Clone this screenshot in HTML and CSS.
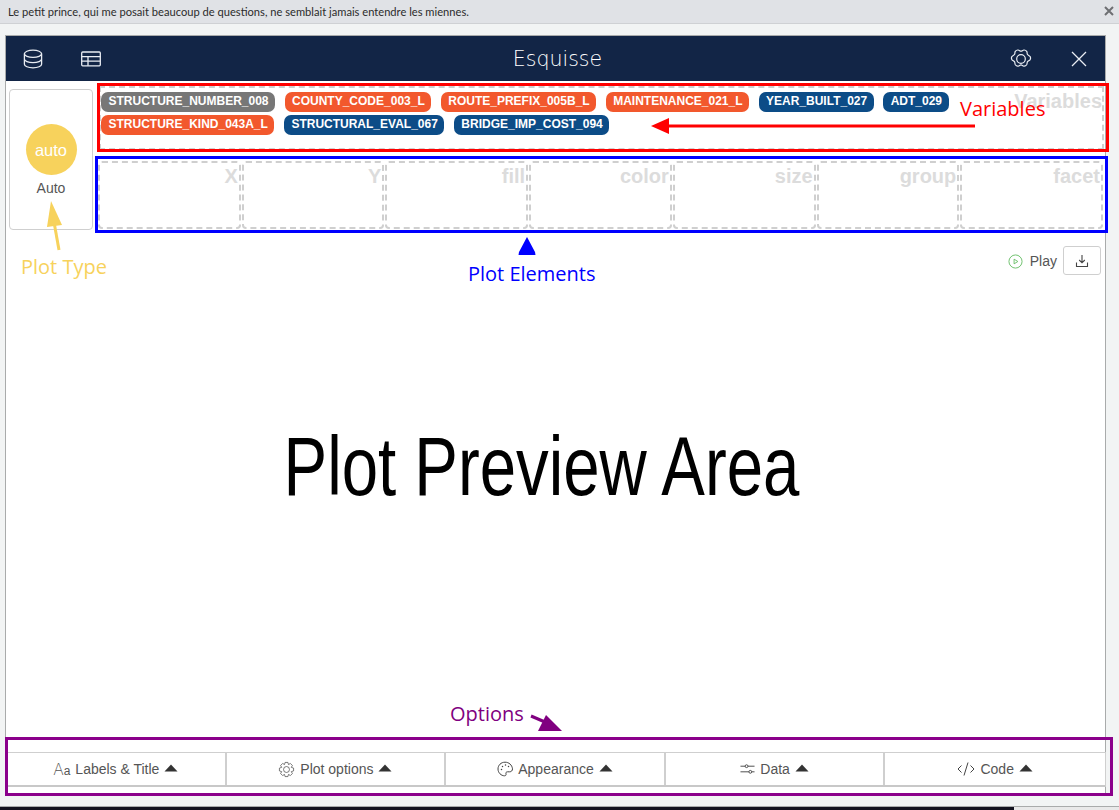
FILE: index.html
```html
<!DOCTYPE html>
<html lang="en">
<head>
<meta charset="utf-8">
<title>Esquisse</title>
<link rel="stylesheet" href="styles.css">
</head>
<body>
<div class="notice">
  <span>Le petit prince, qui me posait beaucoup de questions, ne semblait jamais entendre les miennes.</span>
  <svg class="notice-x" viewBox="0 0 10 10" width="10" height="10"><path d="M1 1l8 8M9 1l-8 8"/></svg>
</div>
<div class="stage">
  <main class="modal">
    <header class="head">
      <div class="head-side">
        <svg class="hicon" viewBox="0 0 20 20" width="20" height="20"><ellipse cx="10" cy="4.8" rx="8.6" ry="3.6"/><path d="M1.4 4.8v10.4c0 2 3.9 3.6 8.6 3.6s8.6-1.600 8.600-3.600V4.800M1.400 10c0 2 3.900 3.600 8.600 3.600s8.600-1.600 8.600-3.600"/></svg>
        <svg class="hicon" viewBox="0 0 20 16" width="20" height="16"><rect x=".7" y="1" width="18.600" height="13.800" rx="1"/><path d="M.7 5.600h18.600M.7 10.200h18.600M7 5.600v9.200"/></svg>
      </div>
      <div class="brand">Esquisse</div>
      <div class="head-side right">
        <svg class="hicon" viewBox="0 0 24 24" width="22" height="22"><circle cx="12" cy="12" r="4.700"/><path d="M8.800 2.200c1.500.2 2 1.300 3.200 1.300s1.700-1.100 3.200-1.300c1.200-.1 2.300.5 3 1.500.8 1.300.2 2.400.9 3.400s2 1.100 2.900 2.300c.6 1.100.6 2.100 0 3.200-.9 1.200-2.200 1.300-2.900 2.300s-.1 2.100-.9 3.400c-.7 1-1.800 1.600-3 1.500-1.500-.2-2-1.300-3.200-1.300s-1.700 1.100-3.200 1.300c-1.200.1-2.300-.5-3-1.500-.8-1.300-.2-2.400-.9-3.400s-2-1.100-2.900-2.300c-.6-1.100-.6-2.100 0-3.200.9-1.200 2.200-1.300 2.900-2.300s.1-2.100.9-3.400c.7-1 1.800-1.600 3-1.500z"/></svg>
        <svg class="hicon" viewBox="0 0 16 16" width="16" height="16"><path d="M1 1l14 14M15 1L1 15"/></svg>
      </div>
    </header>

    <section class="builder">
      <div class="plot-card">
        <div class="auto-badge">auto</div>
        <div class="auto-label">Auto</div>
      </div>
      <div class="builder-main">
        <div class="variables">
          <span class="zone-label vars-label">Variables</span>
          <span class="chip grey">STRUCTURE_NUMBER_008</span>
          <span class="chip orange">COUNTY_CODE_003_L</span>
          <span class="chip orange">ROUTE_PREFIX_005B_L</span>
          <span class="chip orange">MAINTENANCE_021_L</span>
          <span class="chip blue">YEAR_BUILT_027</span>
          <span class="chip blue">ADT_029</span>
          <span class="chip orange">STRUCTURE_KIND_043A_L</span>
          <span class="chip blue">STRUCTURAL_EVAL_067</span>
          <span class="chip blue">BRIDGE_IMP_COST_094</span>
        </div>
        <div class="zones">
          <div class="zone"><span class="zone-label">X</span></div>
          <div class="zone"><span class="zone-label">Y</span></div>
          <div class="zone"><span class="zone-label">fill</span></div>
          <div class="zone"><span class="zone-label">color</span></div>
          <div class="zone"><span class="zone-label">size</span></div>
          <div class="zone"><span class="zone-label">group</span></div>
          <div class="zone"><span class="zone-label">facet</span></div>
        </div>
      </div>
    </section>

    <div class="actions">
      <svg class="play-icon" viewBox="0 0 16 16" width="15" height="15"><circle cx="8" cy="8" r="7"/><path class="play-tri" d="M6.500 5.500l4 2.500-4 2.500z"/></svg>
      <span class="play-text">Play</span>
      <button class="download" type="button">
        <svg class="dl-icon" viewBox="0 0 14 14" width="14" height="14"><path d="M7 1v7.500M4.200 6L7 8.800 9.800 6M1.500 8.500v4h11v-4"/></svg>
      </button>
    </div>

    <div class="preview"><span class="preview-text">Plot Preview Area</span></div>

    <footer class="options">
      <button class="opt" type="button"><span class="aa"><span class="aa-big">A</span>a</span> Labels &amp; Title <svg class="caret" viewBox="0 0 14 8" width="14" height="8"><path d="M7 .500L13.500 7.500H.5z"/></svg></button>
      <button class="opt" type="button"><svg class="oicon" viewBox="0 0 24 24" width="17" height="17"><circle cx="12" cy="12" r="4.200"/><path d="M10 2h4l.8 3 2.700-1.500 2.800 2.800L18.800 9l3.200 1v4l-3.200 1 1.500 2.700-2.800 2.800-2.700-1.500-.8 3h-4l-.8-3-2.700 1.500-2.800-2.800L5.200 15 2 14v-4l3.200-1-1.500-2.700 2.800-2.800L9.200 5z" stroke-linejoin="round"/></svg> Plot options <svg class="caret" viewBox="0 0 14 8" width="14" height="8"><path d="M7 .500L13.500 7.500H.5z"/></svg></button>
      <button class="opt" type="button"><svg class="oicon" viewBox="0 0 16 16" width="16" height="16"><path d="M8 1.200C4 1.200 1 4.200 1 8s3.200 6.800 6.500 6.800c1.300 0 1.800-.9 1.500-1.900-.4-1.200.2-2.100 1.500-2.100h2.200c1.600 0 2.800-1.100 2.800-3C15 4 12 1.200 8 1.200z"/><path class="dots" d="M4.500 8.500h.01M5.500 5.500h.01M8.500 4h.01M11.500 5.500h.01"/></svg> Appearance <svg class="caret" viewBox="0 0 14 8" width="14" height="8"><path d="M7 .500L13.500 7.500H.5z"/></svg></button>
      <button class="opt" type="button"><svg class="oicon" viewBox="0 0 16 12" width="15" height="12"><path d="M.5 3h5M8.500 3h7M.5 9h9M12.500 9h3"/><circle cx="7" cy="3" r="1.500"/><circle cx="11" cy="9" r="1.500"/></svg> Data <svg class="caret" viewBox="0 0 14 8" width="14" height="8"><path d="M7 .500L13.500 7.500H.5z"/></svg></button>
      <button class="opt" type="button"><svg class="oicon" viewBox="0 0 18 14" width="18" height="14"><path d="M4.500 3.500L1 7l3.500 3.500M13.500 3.500L17 7l-3.500 3.500M11 .5L7 13.500"/></svg> Code <svg class="caret" viewBox="0 0 14 8" width="14" height="8"><path d="M7 .500L13.500 7.500H.5z"/></svg></button>
    </footer>
  </main>
</div>
<div class="under"></div>

<div class="mark mark-red"></div>
<div class="mark mark-blue"></div>
<div class="mark mark-purple"></div>
<span class="note note-vars">Variables</span>
<span class="note note-type">Plot Type</span>
<span class="note note-elements">Plot Elements</span>
<span class="note note-options">Options</span>
<svg class="arrows" viewBox="0 0 1119 810" width="1119" height="810">
  <path class="a-red" d="M975 126H665" />
  <path class="a-red-h" d="M651 126l18-8v16z"/>
  <path class="a-blue-h" d="M527 237l8 15 .5 3h-17l.5-3z"/>
  <path class="a-yellow" d="M59 250L54 222"/>
  <path class="a-yellow-h" d="M51 201l11 24-15 2z"/>
  <path class="a-purple" d="M531 716l14 6"/>
  <path class="a-purple-h" d="M562 731l-24 0 8-16z"/>
</svg>
</body>
</html>
```
FILE: styles.css
```css
* { box-sizing: border-box; }
html, body { margin: 0; height: 100%; overflow: hidden; }
body {
  width: 1119px;
  height: 810px;
  display: flex;
  flex-direction: column;
  background: #f2f4f4;
  font-family: "Liberation Sans", Arial, sans-serif;
  position: relative;
}
.notice {
  height: 24px;
  flex: none;
  background: #e0e2e6;
  border-bottom: 1px solid #cfd1d4;
  display: flex;
  align-items: center;
  justify-content: space-between;
  padding: 0 5px 1px 8px;
  font-family: "Lato", sans-serif;
  font-size: 11.150px;
  color: #2b2b2b;
}
.notice-x path { fill: none; stroke: #6d6f72; stroke-width: 2; }
.stage { flex: 1; padding: 11px 13px 0 5px; min-height: 0; }
.under {
  height: 4px;
  flex: none;
  border-top: 1px solid #a9abab;
  background: linear-gradient(to right, #14131f 1014px, #e9e9e9 1014px);
}
.modal {
  height: 760px;
  border: 1px solid #a9abab;
  border-bottom: 0;
  background: #fff;
  display: flex;
  flex-direction: column;
}
.head {
  height: 45px;
  flex: none;
  background: #122546;
  display: flex;
  align-items: center;
  justify-content: space-between;
  padding: 0 18px 0 17px;
  position: relative;
}
.head-side { display: flex; align-items: center; gap: 38px; }
.head-side.right { gap: 39px; }
.hicon { fill: none; stroke: #e9edf3; stroke-width: 1.300; }
.brand {
  position: absolute;
  left: 0; right: 0;
  text-align: center;
  font-family: "DejaVu Sans", sans-serif;
  font-weight: 300;
  font-size: 20.500px;
  color: #fff;
  pointer-events: none;
  padding-top: 1px;
  padding-left: 4px;
}
.builder { display: flex; flex: none; height: 155px; }
.plot-card {
  width: 84px;
  height: 141px;
  margin: 8px 0 0 3px;
  border: 1px solid #cfcfcf;
  border-radius: 4px;
  flex: none;
  display: flex;
  flex-direction: column;
  align-items: center;
  padding-top: 34px;
}
.auto-badge {
  width: 51px;
  height: 51px;
  border-radius: 50%;
  background: #f7d25c;
  color: #fff;
  font-size: 16.500px;
  display: flex;
  align-items: center;
  justify-content: center;
  padding-top: 1px;
}
.auto-label { margin-top: 5px; font-size: 14px; color: #555; }
.builder-main { flex: 1; min-width: 0; padding: 5px 0 0 5px; }
.variables {
  height: 64px;
  border: 2px dashed #d0d0d0;
  padding: 4px 0 0 0;
  position: relative;
  display: flex;
  flex-wrap: wrap;
  align-content: flex-start;
  gap: 3px 9.500px;
  margin-left: 1px;
  margin-right: 1px;
}
.chip {
  height: 20px;
  line-height: 19px;
  padding: 0 6.500px 0 7.500px;
  border-radius: 7px;
  color: #fff;
  font-size: 12px;
  font-weight: 700;
  white-space: nowrap;
}
.grey { background: #777; }
.orange { background: #f2582d; }
.blue { background: #0c4c87; }
.zone-label {
  position: absolute;
  top: 2px;
  right: 1px;
  color: #dcdcdc;
  font-size: 20px;
  font-weight: 700;
  line-height: 23px;
}
.vars-label { top: 2px; right: 0; }
.zones { display: flex; margin-top: 11px; margin-right: 1px; }
.zone {
  flex: 1;
  height: 68px;
  border: 2px dashed #cfcfcf;
  border-radius: 4px;
  position: relative;
  margin-right: 1px;
}
.actions {
  flex: none;
  height: 29px;
  margin-top: 10px;
  display: flex;
  align-items: center;
  justify-content: flex-end;
  padding-right: 4px;
}
.play-icon { fill: none; stroke: #6abf69; stroke-width: 1; margin-top: 1px; }
.play-tri { fill: none; stroke: #6abf69; }
.play-text { margin: 0 6px 0 7px; color: #555; font-size: 14px; margin-top: 1px; }
.download {
  width: 38px;
  height: 29px;
  padding: 0;
  background: #fff;
  border: 1px solid #cfcfcf;
  border-radius: 3px;
  display: flex;
  align-items: center;
  justify-content: center;
}
.dl-icon { fill: none; stroke: #444; stroke-width: 1.100; }
.preview {
  flex: 1;
  min-height: 0;
  display: flex;
  justify-content: center;
  padding: 146px 28px 0 0;
}
.preview-text {
  font-size: 84px;
  line-height: 90px;
  color: #000;
  display: inline-block;
  white-space: nowrap;
  transform: scaleX(.778);
  height: 90px;
}
.options {
  flex: none;
  height: 35px;
  margin: 0 -1px 8px 1px;
  display: grid;
  grid-template-columns: repeat(5, 1fr);
  border-top: 1px solid #cfcfcf;
  border-bottom: 2px solid #c8c8c8;
  border-right: 1px solid #cfcfcf;
}
.opt {
  padding: 0;
  background: #fff;
  border: 0;
  border-right: 2px solid #cfcfcf;
  display: flex;
  align-items: center;
  justify-content: center;
  gap: 5px;
  font-family: inherit;
  font-size: 14px;
  color: #555;
}
.opt:last-child { border-right: 0; }
.aa { color: #555; font-size: 12px; }
.aa-big { font-family: "Inter", sans-serif; font-size: 16px; font-weight: 200; }
.oicon { fill: none; stroke: #444; stroke-width: 1; }
.oicon .dots { stroke-width: 1.500; stroke-linecap: round; }
.caret { fill: #333; stroke: none; margin-bottom: 2px; }
.mark { position: absolute; pointer-events: none; background: transparent; }
.mark-red { left: 97px; top: 83px; width: 1012px; height: 69px; border: 3px solid #f00; }
.mark-blue { left: 95px; top: 156px; width: 1013px; height: 77px; border: 3px solid #00f; }
.mark-purple { left: 5px; top: 737px; width: 1108px; height: 59px; border: 3px solid #8b008b; }
.note { position: absolute; font-family: "Open Sans", sans-serif; font-size: 20px; line-height: 26px; white-space: nowrap; }
.note-vars { left: 960px; top: 96px; color: #f00; }
.note-type { left: 21px; top: 254px; color: #f7d25c; }
.note-elements { left: 468px; top: 261px; color: #00f; }
.note-options { left: 450px; top: 701px; color: #800080; }
.arrows { position: absolute; left: 0; top: 0; pointer-events: none; }
.a-red { stroke: #f00; stroke-width: 3; fill: none; }
.a-red-h { fill: #f00; }
.a-blue-h { fill: #00f; }
.a-yellow { stroke: #f7d25c; stroke-width: 3; fill: none; }
.a-yellow-h { fill: #f7d25c; }
.a-purple { stroke: #800080; stroke-width: 3; fill: none; }
.a-purple-h { fill: #800080; }
```
